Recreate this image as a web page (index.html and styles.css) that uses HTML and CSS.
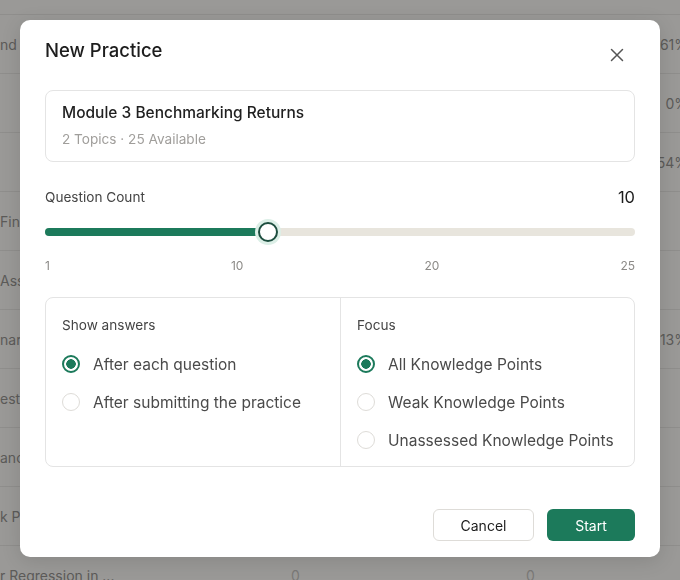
FILE: index.html
```html
<!DOCTYPE html>
<html lang="en">

<head>
    <meta charset="UTF-8">
    <meta name="viewport" content="width=device-width, initial-scale=1.0">
    <title>New Practice</title>
    <link rel="stylesheet" href="styles.css">
</head>

<body>
    <div class="page">
        <div class="row"><span class="name">nd I</span><span class="num"></span><span class="num"></span><span class="pct">61%</span></div>
        <div class="row"><span class="name"></span><span class="num"></span><span class="num"></span><span class="pct">0%</span></div>
        <div class="row"><span class="name"></span><span class="num"></span><span class="num"></span><span class="pct">54%</span></div>
        <div class="row"><span class="name">Fina</span><span class="num"></span><span class="num"></span><span class="pct"></span></div>
        <div class="row"><span class="name">Ass</span><span class="num"></span><span class="num"></span><span class="pct"></span></div>
        <div class="row"><span class="name">nar</span><span class="num"></span><span class="num"></span><span class="pct">13%</span></div>
        <div class="row"><span class="name">esti</span><span class="num"></span><span class="num"></span><span class="pct"></span></div>
        <div class="row"><span class="name">anc</span><span class="num"></span><span class="num"></span><span class="pct"></span></div>
        <div class="row"><span class="name">k Pri</span><span class="num"></span><span class="num"></span><span class="pct"></span></div>
        <div class="row"><span class="name">r Regression in ...</span><span class="num">0</span><span class="num">0</span><span class="pct"></span></div>
    </div>

    <div class="overlay">
        <div class="modal">
            <div class="modal-header">
                <h2>New Practice</h2>
                <button class="close" type="button">
                    <svg width="14" height="14" viewBox="0 0 14 14">
                        <path d="M1.5 1.5 L12.5 12.5 M12.5 1.5 L1.5 12.5" stroke="#555" stroke-width="1.5" stroke-linecap="round" fill="none"/>
                    </svg>
                </button>
            </div>

            <div class="module-card">
                <div class="module-title">Module 3 Benchmarking Returns</div>
                <div class="module-meta">2 Topics · 25 Available</div>
            </div>

            <div class="count-row">
                <span class="count-label">Question Count</span>
                <span class="count-value">10</span>
            </div>

            <div class="slider">
                <div class="track">
                    <div class="fill" style="width: 37.5%"></div>
                    <div class="thumb" style="left: 37.5%"></div>
                </div>
            </div>
            <div class="ticks">
                <span>1</span>
                <span>10</span>
                <span>20</span>
                <span>25</span>
            </div>

            <div class="options">
                <div class="option-group">
                    <div class="group-label">Show answers</div>
                    <label class="radio"><span class="dot checked"></span>After each question</label>
                    <label class="radio"><span class="dot"></span>After submitting the practice</label>
                </div>
                <div class="option-group">
                    <div class="group-label">Focus</div>
                    <label class="radio"><span class="dot checked"></span>All Knowledge Points</label>
                    <label class="radio"><span class="dot"></span>Weak Knowledge Points</label>
                    <label class="radio"><span class="dot"></span>Unassessed Knowledge Points</label>
                </div>
            </div>

            <div class="modal-footer">
                <button class="btn btn-cancel" type="button">Cancel</button>
                <button class="btn btn-start" type="button">Start</button>
            </div>
        </div>
    </div>
</body>

</html>
```

FILE: styles.css
```css
body {
    font-family: Inter, "Noto Sans", Arial, sans-serif;
    margin: 0;
    padding: 0;
    background-color: #9a9997;
    height: 580px;
    overflow: hidden;
}

/* dimmed table behind the dialog */
.page {
    margin-top: 14px;
    border-top: 1px solid #8f8e8c;
    color: #5c5b59;
    font-size: 14px;
}

.row {
    display: flex;
    align-items: center;
    height: 58px;
    border-bottom: 1px solid #8f8e8c;
}

.name {
    width: 178px;
    white-space: nowrap;
}

.num {
    width: 235px;
    text-align: center;
    color: #7a7977;
}

.pct {
    flex: 1;
    text-align: right;
    margin-right: -8px;
}

.overlay {
    position: fixed;
    top: 0;
    left: 0;
    right: 0;
    bottom: 0;
}

.modal {
    position: absolute;
    top: 20px;
    left: 20px;
    width: 640px;
    height: 537px;
    box-sizing: border-box;
    padding: 18px 25px 16px;
    background-color: white;
    border-radius: 10px;
    box-shadow: 0 4px 20px rgba(0, 0, 0, 0.12);
    display: flex;
    flex-direction: column;
}

.modal-header {
    display: flex;
    justify-content: space-between;
    align-items: flex-start;
}

.modal-header h2 {
    margin: 0;
    font-size: 18.5px;
    line-height: 24px;
    font-weight: 500;
    color: #1d1d1d;
}

.close {
    border: none;
    background: none;
    padding: 0;
    margin: 5px 6px 0 0;
    width: 24px;
    height: 24px;
    display: flex;
    align-items: center;
    justify-content: center;
    cursor: pointer;
}

.module-card {
    margin-top: 23px;
    border: 1px solid #e4e4e4;
    border-radius: 8px;
    padding: 12px 16px;
}

.module-title {
    font-size: 15.5px;
    line-height: 20px;
    font-weight: 500;
    color: #1f1f1f;
}

.module-meta {
    margin-top: 6px;
    font-size: 13.6px;
    line-height: 20px;
    color: #a09e9b;
}

.count-row {
    margin-top: 24px;
    display: flex;
    justify-content: space-between;
    align-items: center;
    height: 22px;
}

.count-label {
    font-size: 13.6px;
    color: #444;
}

.count-value {
    font-size: 16.5px;
    color: #1d1d1d;
}

.slider {
    margin-top: 20px;
}

.track {
    position: relative;
    height: 8px;
    border-radius: 4px;
    background-color: #e8e5dd;
}

.fill {
    height: 100%;
    border-radius: 4px;
    background-color: #1c7a5b;
}

.thumb {
    position: absolute;
    top: 50%;
    width: 16px;
    height: 16px;
    margin: -10px 0 0 -8px;
    border: 2px solid #1d4e3f;
    border-radius: 50%;
    background-color: white;
    box-shadow: 0 0 0 3px #dcefe7;
}

.ticks {
    margin-top: 22px;
    display: flex;
    justify-content: space-between;
    font-size: 12px;
    line-height: 16px;
    color: #8c8a87;
}

.options {
    margin-top: 23px;
    display: grid;
    grid-template-columns: 1fr 1fr;
    height: 170px;
    box-sizing: border-box;
    border: 1px solid #e4e4e4;
    border-radius: 8px;
}

.option-group {
    padding: 17px 16px 0;
}

.option-group + .option-group {
    border-left: 1px solid #e4e4e4;
}

.group-label {
    font-size: 13.6px;
    line-height: 20px;
    color: #444;
    margin-bottom: 10px;
}

.radio {
    display: flex;
    align-items: center;
    gap: 13px;
    height: 38px;
    font-size: 15.5px;
    color: #4a4a4a;
    white-space: nowrap;
}

.dot {
    width: 16px;
    height: 16px;
    border: 1px solid #dedcd8;
    border-radius: 50%;
    box-sizing: content-box;
    flex-shrink: 0;
}

.dot.checked {
    width: 14px;
    height: 14px;
    border: 2px solid #1c7a5b;
    background: radial-gradient(circle, #1c7a5b 0 4.5px, white 5px);
}

.modal-footer {
    margin-top: auto;
    display: flex;
    justify-content: flex-end;
    gap: 13px;
}

.btn {
    height: 32px;
    padding: 0;
    border-radius: 6px;
    font-family: inherit;
    font-size: 14px;
    cursor: pointer;
}

.btn-cancel {
    width: 101px;
    border: 1px solid #dedcd8;
    background-color: white;
    color: #1d1d1d;
}

.btn-start {
    width: 88px;
    border: none;
    background-color: #1c7a5b;
    color: white;
}
```
